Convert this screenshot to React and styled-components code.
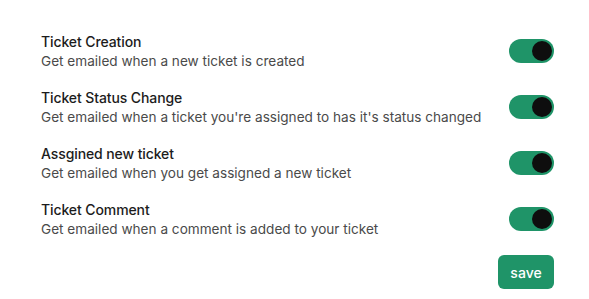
import React, { useState } from 'react'
import styled, { createGlobalStyle } from 'styled-components'

const GlobalStyle = createGlobalStyle`
    body {
        margin: 0;
        background: #ffffff;
        font-family: Inter, "Noto Sans", sans-serif;
    }
`

const Page = styled.div`
    width: 589px;
    box-sizing: border-box;
    padding: 23px 35px 0 41px;
    display: flex;
    flex-direction: column;
`

const Row = styled.div`
    display: flex;
    flex-flow: row nowrap;
    align-items: center;
    justify-content: space-between;
    height: 56px;
`

const Info = styled.div`
    display: flex;
    flex-direction: column;
    gap: 3px;
`

const Title = styled.h3`
    margin: 0;
    font-size: 14px;
    font-weight: 500;
    color: #1c1c1c;
    line-height: 17px;
    letter-spacing: -0.1px;
`

const Desc = styled.p`
    margin: 0;
    font-size: 13.6px;
    font-weight: 400;
    color: #4a4a4a;
    line-height: 17px;
`

const Toggle = styled.button`
    width: 45px;
    height: 24px;
    border-radius: 12px;
    border: none;
    padding: 2px;
    background: ${p => (p.$on ? '#1f9468' : '#d1d5db')};
    display: flex;
    justify-content: ${p => (p.$on ? 'flex-end' : 'flex-start')};
    align-items: center;
    cursor: pointer;
    box-sizing: border-box;
`

const Thumb = styled.span`
    width: 20px;
    height: 20px;
    border-radius: 50%;
    background: #0e0e0e;
`

const Footer = styled.div`
    display: flex;
    justify-content: flex-end;
    margin-top: 8px;
`

const SaveButton = styled.button`
    width: 56px;
    height: 34px;
    border: none;
    border-radius: 6px;
    background: #1f9468;
    color: #ffffff;
    font-family: Inter, "Noto Sans", sans-serif;
    font-size: 14px;
    font-weight: 500;
    cursor: pointer;
`

const items = [
    { title: 'Ticket Creation', desc: 'Get emailed when a new ticket is created' },
    { title: 'Ticket Status Change', desc: "Get emailed when a ticket you're assigned to has it's status changed" },
    { title: 'Assgined new ticket', desc: 'Get emailed when you get assigned a new ticket' },
    { title: 'Ticket Comment', desc: 'Get emailed when a comment is added to your ticket' },
]

const App = () => {
    const [flags, setFlags] = useState(items.map(() => true))

    return (
        <>
            <GlobalStyle />
            <Page>
                {items.map((item, i) => (
                    <Row key={item.title}>
                        <Info>
                            <Title>{item.title}</Title>
                            <Desc>{item.desc}</Desc>
                        </Info>
                        <Toggle
                            $on={flags[i]}
                            onClick={() => setFlags(f => f.map((v, j) => (j === i ? !v : v)))}
                        >
                            <Thumb />
                        </Toggle>
                    </Row>
                ))}
                <Footer>
                    <SaveButton>save</SaveButton>
                </Footer>
            </Page>
        </>
    )
}

export default App
